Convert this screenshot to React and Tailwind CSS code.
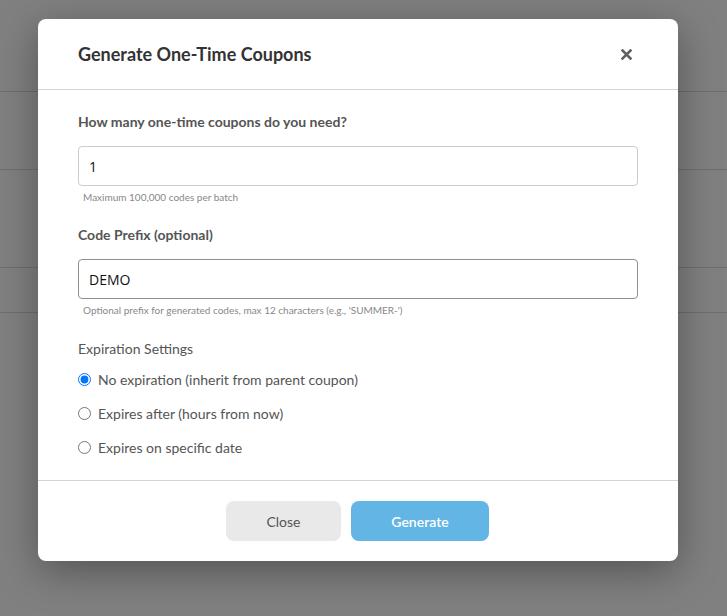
import { useEffect, useRef, useState } from 'react';

const rows = [
  'h-[92px]',
  'h-[78px]',
  'h-[98px]',
  'h-[45px]',
];

function Backdrop() {
  return (
    <div className="h-[616px] w-full bg-[#808080]">
      {rows.map((h, i) => (
        <div key={i} className={`${h} border-b border-[#6e6e6e]`} />
      ))}
    </div>
  );
}

function Radio({ label, checked, onChange }) {
  return (
    <label className="flex h-[34px] items-center gap-[7px] cursor-pointer">
      <input
        type="radio"
        name="expiration"
        checked={checked}
        onChange={onChange}
        className="m-0 h-[13px] w-[13px] accent-[#0075ff]"
      />
      <span className="text-[14px] text-[#555555]">{label}</span>
    </label>
  );
}

export default function App() {
  const [count, setCount] = useState('1');
  const [prefix, setPrefix] = useState('DEMO');
  const [expiration, setExpiration] = useState('none');
  const prefixRef = useRef(null);

  // keep the caret at the end of the prefix field
  useEffect(() => {
    const el = prefixRef.current;
    if (el) {
      el.focus();
      el.setSelectionRange(el.value.length, el.value.length);
    }
  }, []);

  return (
    <div className="relative h-[616px] w-[727px] overflow-hidden font-['Lato',sans-serif]">
      <Backdrop />
      <div className="absolute inset-0 flex pt-[19px] pl-[38px]">
        <div className="flex h-[542px] w-[640px] flex-col rounded-[8px] bg-white shadow-[0_10px_40px_rgba(0,0,0,0.35)]">
          <div className="flex h-[71px] items-center justify-between border-b border-[#d4d4d4] pl-10 pr-[42px]">
            <h2 className="text-[18px] font-bold text-[#333333]">Generate One-Time Coupons</h2>
            <button className="flex h-5 w-5 items-center justify-center text-[#5f5f5f]">
              <svg width="11" height="11" viewBox="0 0 11 11">
                <path d="M1.5 1.5 L9.5 9.5 M9.5 1.5 L1.5 9.5" stroke="currentColor" strokeWidth="2.6" strokeLinecap="square" />
              </svg>
            </button>
          </div>

          <div className="flex-1 px-10 pt-[22px]">
            <label className="block h-5 text-[14px] leading-5 font-bold text-[#555555]">
              How many one-time coupons do you need?
            </label>
            <input
              value={count}
              onChange={(e) => setCount(e.target.value)}
              className="mt-[14px] block h-10 w-full rounded-[4px] border border-[#cccccc] px-[10px] font-['Open_Sans',sans-serif] text-[14px] text-[#111111] outline-none"
            />
            <p className="mt-1 h-[14px] pl-[5px] text-[10px] leading-[14px] text-[#888888]">Maximum 100,000 codes per batch</p>

            <label className="mt-[21px] block h-5 text-[14px] leading-5 font-bold text-[#555555]">
              Code Prefix (optional)
            </label>
            <input
              ref={prefixRef}
              value={prefix}
              onChange={(e) => setPrefix(e.target.value)}
              className="mt-[14px] block h-10 w-full rounded-[4px] border border-[#8f8f8f] px-[10px] font-['Open_Sans',sans-serif] text-[14px] text-[#111111] caret-black outline-none"
            />
            <p className="mt-1 h-[14px] pl-[5px] text-[10px] leading-[14px] text-[#888888]">
              Optional prefix for generated codes, max 12 characters (e.g., 'SUMMER-')
            </p>

            <p className="mt-[22px] h-5 text-[14px] leading-5 text-[#555555]">Expiration Settings</p>
            <div className="mt-[3px] flex flex-col">
              <Radio
                label="No expiration (inherit from parent coupon)"
                checked={expiration === 'none'}
                onChange={() => setExpiration('none')}
              />
              <Radio
                label="Expires after (hours from now)"
                checked={expiration === 'hours'}
                onChange={() => setExpiration('hours')}
              />
              <Radio
                label="Expires on specific date"
                checked={expiration === 'date'}
                onChange={() => setExpiration('date')}
              />
            </div>
          </div>

          <div className="flex h-[81px] items-center justify-center gap-[10px] border-t border-[#d4d4d4] pr-px">
            <button className="h-10 w-[115px] rounded-[8px] bg-[#e9e9e9] text-[14px] text-[#555555]">Close</button>
            <button className="h-10 w-[138px] rounded-[8px] bg-[#62b5e5] text-[14px] font-semibold text-white">
              Generate
            </button>
          </div>
        </div>
      </div>
    </div>
  );
}
